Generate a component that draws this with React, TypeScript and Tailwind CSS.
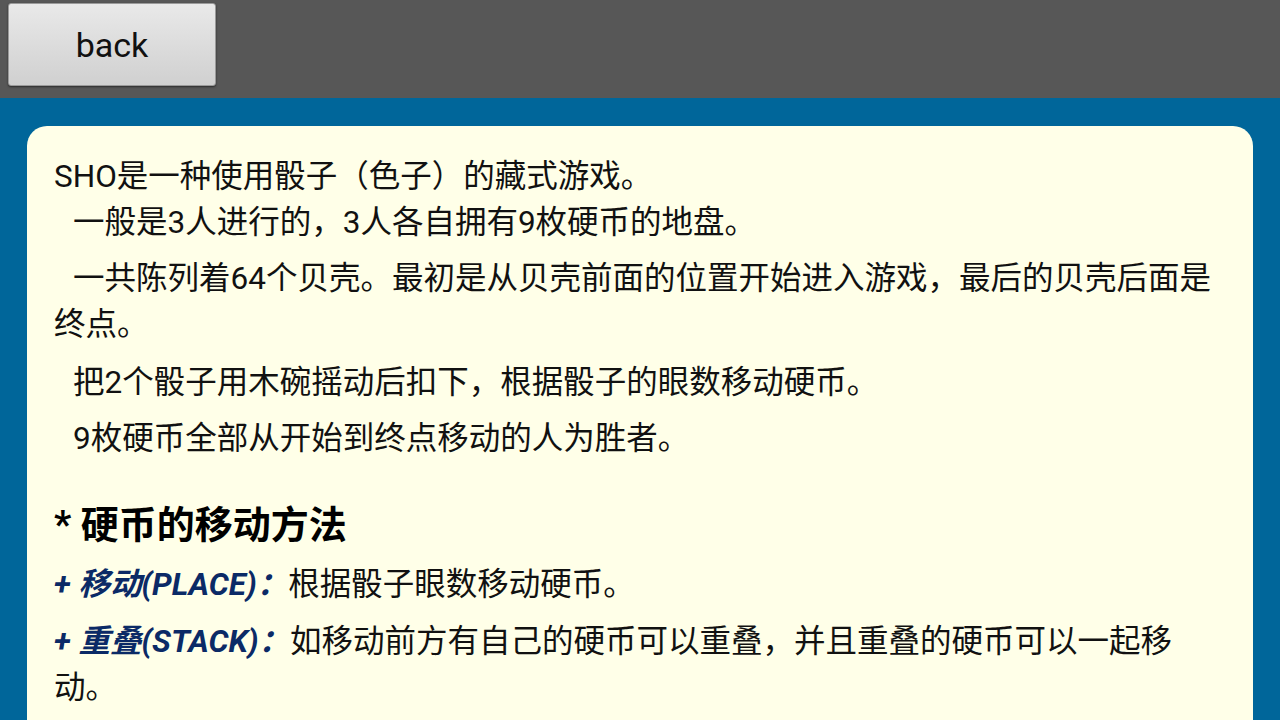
export default function App() {
  const font = { fontFamily: "Roboto, 'Noto Sans CJK SC', sans-serif" };
  return (
    <div className="w-[1280px] h-[720px] overflow-hidden bg-[#00669a]" style={font}>
      {/* top bar */}
      <div className="h-[98px] bg-[#575757] pt-[3px] pl-[8px]">
        <button className="w-[208px] h-[83px] rounded-[3px] border border-[#9a9a9a] bg-gradient-to-b from-[#e9e9e9] to-[#d0d0d0] shadow-[0_1px_2px_rgba(0,0,0,0.5)] text-[34px] text-[#111] leading-none">
          back
        </button>
      </div>

      {/* content card */}
      <div className="px-[27px] pt-[28px]">
        <div className="min-h-[700px] rounded-[20px] bg-[#ffffe8] px-[27px] pt-[28px] pb-10 text-[31.5px] leading-[46px] text-[#111]">
          <p>
            SHO是一种使用骰子（色子）的藏式游戏。
            <br />
            <span className="pl-[19px]">一般是3人进行的，3人各自拥有9枚硬币的地盘。</span>
          </p>
          <p className="mt-[10px] indent-[19px]">
            一共陈列着64个贝壳。最初是从贝壳前面的位置开始进入游戏，最后的贝壳后面是终点。
          </p>
          <p className="mt-[12px] indent-[19px]">把2个骰子用木碗摇动后扣下，根据骰子的眼数移动硬币。</p>
          <p className="mt-[10px] indent-[19px]">9枚硬币全部从开始到终点移动的人为胜者。</p>

          <h2 className="mt-[40px] text-[38px] font-bold leading-[46px] text-black">* 硬币的移动方法</h2>

          <p className="mt-[14px]">
            <span className="font-bold italic text-[#0b2a66]">+ 移动(PLACE)：</span>根据骰子眼数移动硬币。
          </p>
          <p className="mt-[11px]">
            <span className="font-bold italic text-[#0b2a66]">+ 重叠(STACK)：</span>如移动前方有自己的硬币可以重叠，并且重叠的硬币可以一起移动。
          </p>
        </div>
      </div>
    </div>
  );
}
